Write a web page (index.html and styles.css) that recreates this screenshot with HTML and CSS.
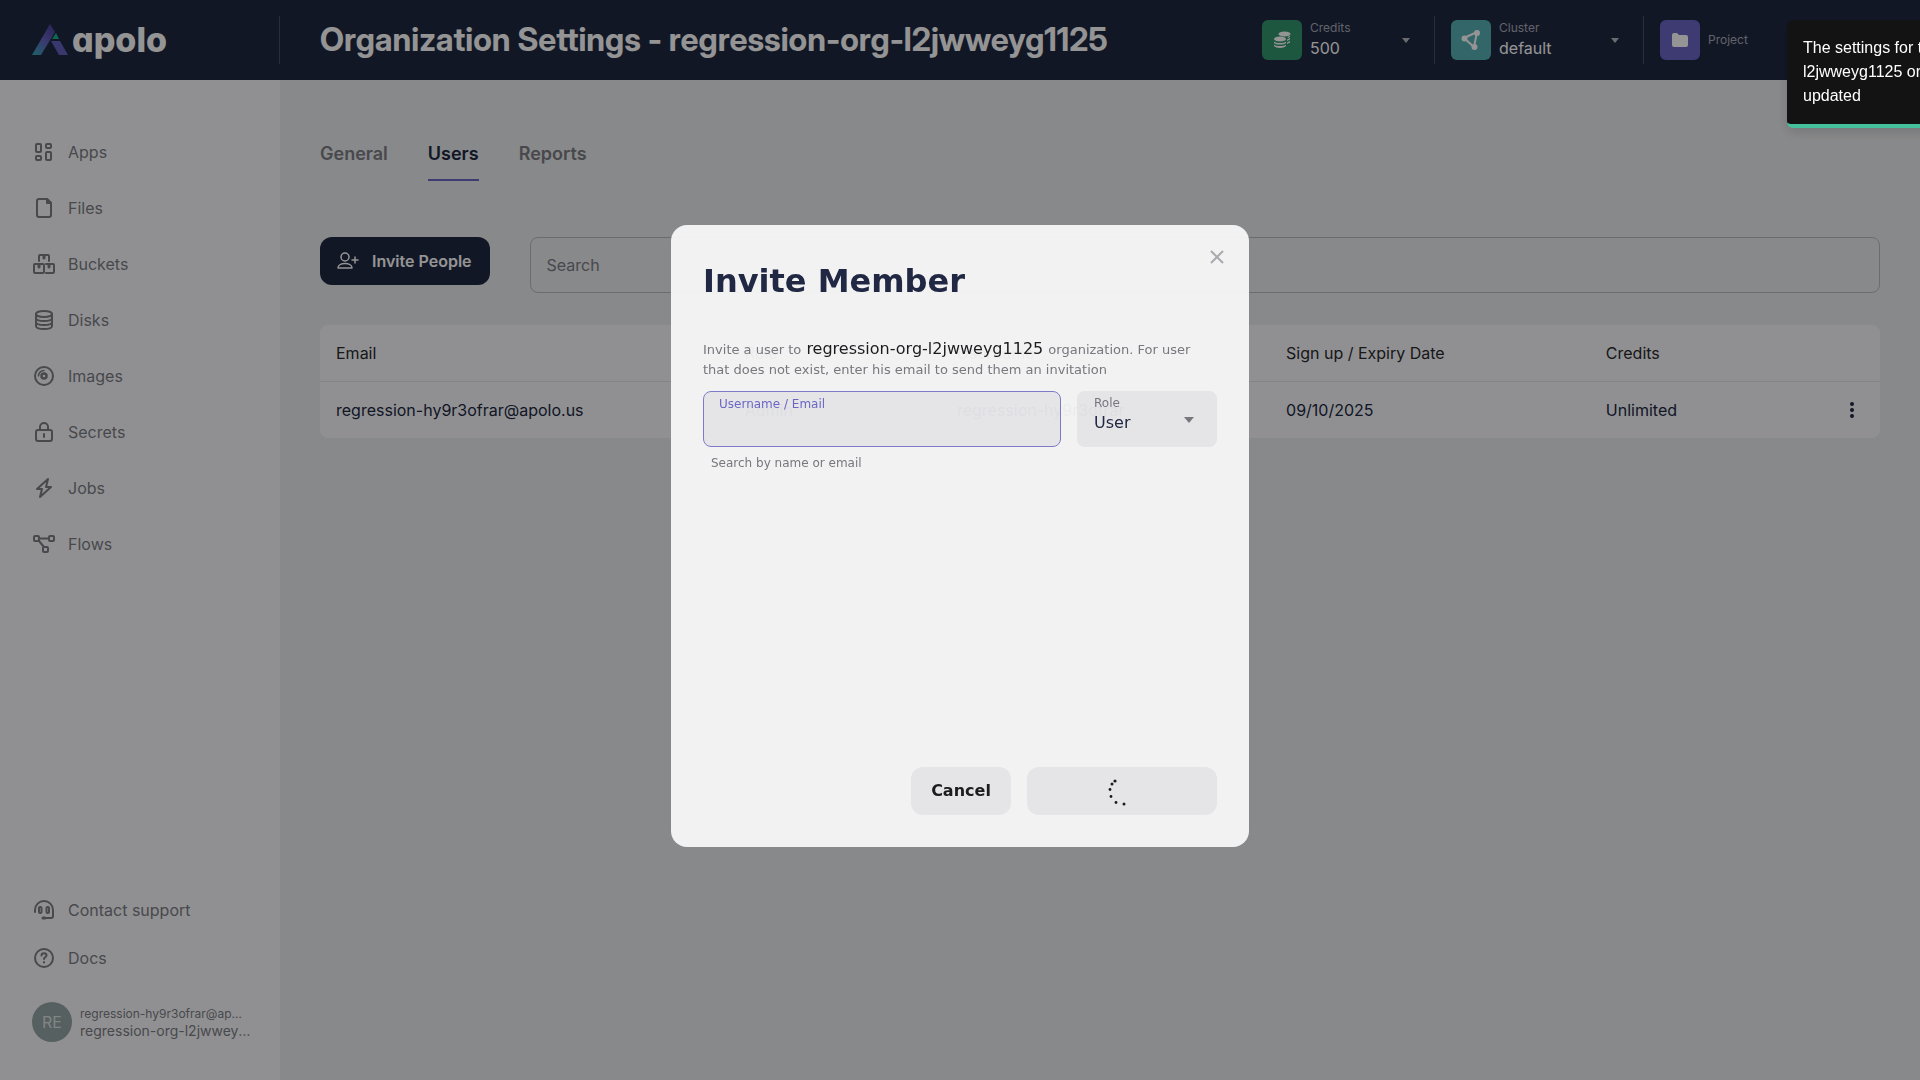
FILE: index.html
```html
<!DOCTYPE html>
<html lang="en">
<head>
<meta charset="utf-8">
<title>Organization Settings</title>
<link rel="stylesheet" href="styles.css">
</head>
<body>
<div class="app">
  <header class="topbar">
    <a class="brand" href="#" aria-label="apolo">
      <svg class="brand-mark" width="36" height="32" viewBox="0 0 36 32">
        <defs>
          <linearGradient id="leg" x1="0" y1="1" x2="0.6" y2="0"><stop offset="0" stop-color="#35a8b8"/><stop offset="0.6" stop-color="#6460bd"/><stop offset="1" stop-color="#5048a0"/></linearGradient>
        </defs>
        <path d="M18 0l5 8L9 31H0z" fill="url(#leg)"/>
        <path d="M19 17h9l8 14h-9z" fill="#6460bd"/>
        <path d="M24 9l3 6h-7z" fill="#18b58a"/>
      </svg>
      <span>apolo</span>
    </a>
    <h1>Organization Settings - regression-org-l2jwweyg1125</h1>
    <div class="switchers">
      <button class="switcher credits" type="button">
        <span class="tile green"><svg width="18" height="18" viewBox="0 0 18 18" fill="#fff"><ellipse cx="11.500" cy="3" rx="6" ry="2.500"/><ellipse cx="7" cy="8" rx="6" ry="2.500"/><path d="M1 10.500c2 2 10 2 12 0v1.500c-2 2-10 2-12 0zM1 13.500c2 2 10 2 12 0V15c-2 2.500-10 2.500-12 0zM14 8.500l3-1.500v1.500l-3 1.500zM14 11.500l3-1.500v1.500L14 13zM14.500 6L17 4.800V6l-2 1z"/></svg></span>
        <span class="pair"><small>Credits</small><b>500</b></span>
        <i class="caret"></i>
      </button>
      <button class="switcher cluster" type="button">
        <span class="tile teal"><svg width="20" height="20" viewBox="0 0 20 20" fill="#fff" stroke="#fff" stroke-width="2"><path d="M3 8l13-6-3 15z" fill="none"/><circle cx="3.500" cy="8.500" r="2"/><circle cx="16" cy="3" r="2"/><circle cx="13.500" cy="17" r="2"/></svg></span>
        <span class="pair"><small>Cluster</small><b>default</b></span>
        <i class="caret"></i>
      </button>
      <button class="switcher project" type="button">
        <span class="tile purple"><svg width="16" height="14" viewBox="0 0 16 14" fill="#fff"><path d="M0 2a2 2 0 0 1 2-2h3l2 2h7a2 2 0 0 1 2 2v8a2 2 0 0 1-2 2H2a2 2 0 0 1-2-2z"/></svg></span>
        <span class="pair"><small>Project</small></span>
      </button>
    </div>
  </header>

  <aside class="sidebar">
    <nav class="menu">
      <a href="#"><svg viewBox="0 0 24 24"><rect x="4" y="4" width="5" height="8" rx="1"/><rect x="14" y="4" width="5" height="4" rx="1"/><rect x="4" y="16" width="5" height="4" rx="1"/><rect x="14" y="12" width="5" height="8" rx="1"/></svg>Apps</a>
      <a href="#"><svg viewBox="0 0 24 24"><path d="M7 3h8l4 4v12a2 2 0 0 1-2 2H7a2 2 0 0 1-2-2V5a2 2 0 0 1 2-2z"/><path d="M15 3v4h4z" fill="currentColor"/></svg>Files</a>
      <a href="#"><svg viewBox="0 0 24 24"><path d="M7 9V4a1 1 0 0 1 1-1h8a1 1 0 0 1 1 1v5"/><rect x="2" y="12" width="10" height="9" rx="1"/><path d="M14 12h7a1 1 0 0 1 1 1v7a1 1 0 0 1-1 1h-7"/><path d="M12 4v2M7 13v2M17 13v2" stroke-width="3"/></svg>Buckets</a>
      <a href="#"><svg viewBox="0 0 24 24"><ellipse cx="12" cy="6" rx="8" ry="3"/><path d="M4 6v12c0 4 16 4 16 0V6M4 10c0 4 16 4 16 0M4 14c0 4 16 4 16 0"/></svg>Disks</a>
      <a href="#"><svg viewBox="0 0 24 24"><circle cx="12" cy="12" r="9"/><circle cx="12" cy="12" r="2.500" stroke-width="2.500"/><path d="M6.500 12A5.500 5.500 0 0 1 12 6.500" stroke-width="1.500"/></svg>Images</a>
      <a href="#"><svg viewBox="0 0 24 24"><rect x="4" y="10" width="16" height="11" rx="2"/><path d="M8 10V7a4 4 0 0 1 8 0v3M12 14v3"/></svg>Secrets</a>
      <a href="#"><svg viewBox="0 0 24 24"><path d="M16 3L5 13h5l-2 8 11-10h-5z"/></svg>Jobs</a>
      <a href="#"><svg viewBox="0 0 24 24"><rect x="2" y="4" width="5" height="5" rx="1"/><rect x="17" y="4" width="5" height="5" rx="1"/><rect x="11" y="15" width="5" height="5" rx="1"/><path d="M7 6.500h10M7 9l5 6"/></svg>Flows</a>
    </nav>
    <nav class="help">
      <a href="#"><svg viewBox="0 0 24 24"><path d="M3 14v-2a9 9 0 0 1 18 0v6a2 2 0 0 1-2 2h-7"/><rect x="7" y="9" width="2.500" height="6" rx="1"/><rect x="14.500" y="9" width="2.500" height="6" rx="1"/><path d="M11 20h2" stroke-width="3"/></svg>Contact support</a>
      <a href="#"><svg viewBox="0 0 24 24"><circle cx="12" cy="12" r="9"/><path d="M9.500 9.500c0-3 5-3 5 0 0 1.500-2.500 1.500-2.500 3.500M12 16v.5"/></svg>Docs</a>
    </nav>
    <div class="account">
      <span class="avatar">RE</span>
      <div class="who"><small>regression-hy9r3ofrar@apolo.us</small><span>regression-org-l2jwweyg1125</span></div>
    </div>
  </aside>

  <main class="content">
    <nav class="tabs"><a href="#">General</a><a class="active" href="#">Users</a><a href="#">Reports</a></nav>
    <div class="tools">
      <button class="invite" type="button"><svg width="24" height="24" viewBox="0 0 24 24"><circle cx="9" cy="8" r="4"/><path d="M2 19c0-6 14-6 14 0zM19 8v6M16 11h6"/></svg>Invite People</button>
      <input class="search" type="text" placeholder="Search" aria-label="Search">
    </div>
    <table class="users">
      <colgroup><col class="c-email"><col class="c-role"><col class="c-name"><col class="c-date"><col></colgroup>
      <thead><tr><th>Email</th><th>Role</th><th>Username</th><th>Sign up / Expiry Date</th><th>Credits</th></tr></thead>
      <tbody><tr><td>regression-hy9r3ofrar@apolo.us</td><td>Admin</td><td>regression-hy9r3ofrar</td><td>09/10/2025</td>
        <td><div class="last">Unlimited<button class="more" type="button" aria-label="More"><svg width="24" height="24" viewBox="0 0 24 24" fill="currentColor"><circle cx="12" cy="6" r="2"/><circle cx="12" cy="12" r="2"/><circle cx="12" cy="18" r="2"/></svg></button></div></td></tr></tbody>
    </table>
  </main>
</div>

<div class="overlay">
  <form class="modal" role="dialog" aria-labelledby="modal-title">
    <button class="close" type="button" aria-label="Close"><svg width="16" height="16" viewBox="0 0 16 16"><path d="M2 2l12 12M14 2L2 14"/></svg></button>
    <h2 id="modal-title">Invite Member</h2>
    <p>Invite a user to <strong>regression-org-l2jwweyg1125</strong> organization. For user that does not exist, enter his email to send them an invitation</p>
    <div class="fields">
      <div class="field focused"><label for="user">Username / Email</label><input id="user" type="text"></div>
      <div class="field role"><label for="role">Role</label><select id="role"><option>User</option></select><i class="caret"></i></div>
    </div>
    <div class="hint">Search by name or email</div>
    <div class="actions">
      <button class="btn" type="button">Cancel</button>
      <button class="btn submit" type="submit" aria-label="Loading"><svg width="30" height="30" viewBox="3 0 30 30" fill="#1c1c1f"><circle cx="11" cy="5" r="1.600"/><circle cx="8" cy="8" r="1.500"/><circle cx="6" cy="13.500" r="1.400"/><circle cx="7" cy="20.500" r="1.400"/><circle cx="12" cy="26.500" r="1.400"/><circle cx="20" cy="28" r="1.500"/></svg></button>
    </div>
  </form>
</div>
<div class="toast" role="status">The settings for the regression-org-l2jwweyg1125 organization have been updated</div>
</body>
</html>
```
FILE: styles.css
```css
* { box-sizing: border-box; }
body { margin: 0; font: 16px/24px Inter, sans-serif; color: #202843; overflow: hidden; }
a { color: inherit; text-decoration: none; }
button, input, select { font: inherit; color: inherit; margin: 0; }
button { border: 0; background: none; padding: 0; }
svg { flex: none; }

.app { display: grid; grid-template: 80px 1fr / 280px 1fr; min-height: 100vh; }
.topbar { grid-column: 1 / -1; display: flex; align-items: center; background: #202843; color: #fff; }
.brand { display: flex; align-items: center; gap: 4px; width: 280px; height: 48px; padding-left: 32px; border-right: 1px solid #4a4e68; font-size: 34px; line-height: 40px; font-weight: 800; font-feature-settings: "cv11"; }
h1 { margin: 0 auto 0 40px; font-family: "Inter Display", Inter, sans-serif; font-size: 32px; line-height: 40px; font-weight: 700; white-space: nowrap; }
.switchers { display: flex; flex: none; width: 658px; }
.switcher { display: flex; align-items: center; gap: 8px; height: 48px; text-align: left; }
.switcher + .switcher { padding-left: 16px; border-left: 1px solid #4a4e68; }
.credits { width: 172px; }
.cluster { width: 209px; }
.switcher .caret { margin: 0 24px 0 auto; }
.tile { display: flex; align-items: center; justify-content: center; width: 40px; height: 40px; border-radius: 6px; }
.green { background: #33976f; }
.teal { background: #58b0b4; }
.purple { background: #6a67c4; }
.pair { display: flex; flex-direction: column; }
.pair small { font-size: 12px; line-height: 16px; color: #a9abb5; }
.pair b { font-weight: 400; line-height: 24px; }
.caret { border: 4px solid transparent; border-top: 5px solid #b9bac0; border-bottom: 0; }

.sidebar { display: flex; flex-direction: column; padding: 44px 32px 38px 32px; background: #f8f9fb; color: #7c7d86; }
.menu a, .help a { display: flex; align-items: center; gap: 12px; height: 56px; }
.help a { height: 48px; }
.menu svg, .help svg { width: 24px; height: 24px; fill: none; stroke: currentColor; stroke-width: 2; stroke-linejoin: round; stroke-linecap: round; }
.help { margin-top: auto; }
.account { display: flex; align-items: center; gap: 8px; margin-top: 20px; }
.avatar { flex: none; width: 40px; height: 40px; border-radius: 50%; background: #95a5a6; color: #dfe3e3; line-height: 40px; text-align: center; }
.who { flex: none; display: flex; flex-direction: column; width: 172px; }
.who small, .who span { overflow: hidden; text-overflow: ellipsis; white-space: nowrap; font-size: 12px; line-height: 17px; }
.who small { padding-right: 6px; }
.who span { font-size: 14px; }

.content { padding: 60px 40px; background: #ebecee; min-width: 0; }
.tabs { display: flex; gap: 40px; font-size: 18px; font-weight: 600; color: #7c7d86; }
.tabs a { height: 41px; line-height: 28px; border-bottom: 2px solid transparent; }
.tabs .active { color: #202843; border-color: #6a67c4; }
.tools { display: flex; align-items: flex-start; gap: 40px; margin: 56px 0 32px; }
.invite { display: flex; align-items: center; gap: 12px; height: 48px; padding: 0 18px 0 16px; border-radius: 12px; background: #202843; color: #fff; font-weight: 600; }
.invite svg { fill: none; stroke: #fff; stroke-width: 1.5; stroke-linejoin: round; stroke-linecap: round; }
.search { flex: 1; height: 56px; padding: 0 16px; border: 1px solid #b9bbc0; border-radius: 8px; background: none; }
.search::placeholder { color: #7c7d86; opacity: 1; }
.users { width: 100%; table-layout: fixed; border-spacing: 0; background: #f8f9fb; border-radius: 8px; }
.users th, .users td { height: 56px; padding: 0 16px; text-align: left; font-weight: 400; }
.users th { height: 57px; border-bottom: 1px solid #e2e3e5; color: #2a2a2e; }
.c-email { width: 26.2%; }
.c-role { width: 13.6%; }
.c-name { width: 21.1%; }
.c-date { width: 20.5%; }
.last { display: flex; align-items: center; justify-content: space-between; }
.more { display: flex; }

.overlay { position: fixed; inset: 0; display: flex; align-items: center; justify-content: center; padding-bottom: 8px; background: rgba(0, 0, 0, .42); font-family: "DejaVu Sans", sans-serif; }
.modal { position: relative; display: flex; flex-direction: column; width: 578px; min-height: 622px; padding: 32px; border-radius: 16px; background: rgba(247, 247, 247, .95); }
.close { position: absolute; top: 24px; right: 24px; display: flex; }
.close svg { stroke: #a9a9ae; stroke-width: 2; }
h2 { margin: 4px 0 38px; font-size: 32px; line-height: 40px; }
p { margin: 0; font-size: 13px; line-height: 20px; color: #77777e; }
strong { margin: 0 1px; font-size: 16px; font-weight: 400; color: #1c1c1f; }
.fields { display: flex; gap: 16px; margin-top: 11px; }
.field { position: relative; flex: 1; height: 56px; border: 1px solid transparent; border-radius: 8px; background: rgba(20, 20, 60, .06); }
.focused { border-color: #7d7bc9; }
.role { flex: none; width: 140px; }
.field label { position: absolute; top: 3px; left: 16px; font-size: 12px; line-height: 16px; color: #77777e; }
.field.focused label { top: 4px; left: 15px; color: #6a67c4; }
.field input, .field select { width: 100%; height: 100%; padding: 12px 16px 4px; border: 0; outline: 0; background: none; appearance: none; }
.field .caret { position: absolute; top: 25px; right: 22px; border-width: 6px 5px 0; border-top-color: #77777e; }
.hint { margin-top: 8px; padding-left: 8px; font-size: 12px; line-height: 16px; color: #77777e; }
.actions { display: flex; justify-content: flex-end; gap: 16px; margin-top: auto; }
.btn { display: flex; align-items: center; justify-content: center; width: 100px; height: 48px; border-radius: 12px; background: rgba(20, 20, 60, .06); color: #1c1c1f; font-weight: 700; }
.submit { width: 190px; }

.toast { position: fixed; top: 20px; right: -187px; width: 320px; padding: 16px; border-bottom: 4px solid #44c09c; border-radius: 6px; background: #131313; color: #fff; font-family: "Liberation Sans", sans-serif; box-shadow: 0 4px 12px rgba(0, 0, 0, .15); }
```
